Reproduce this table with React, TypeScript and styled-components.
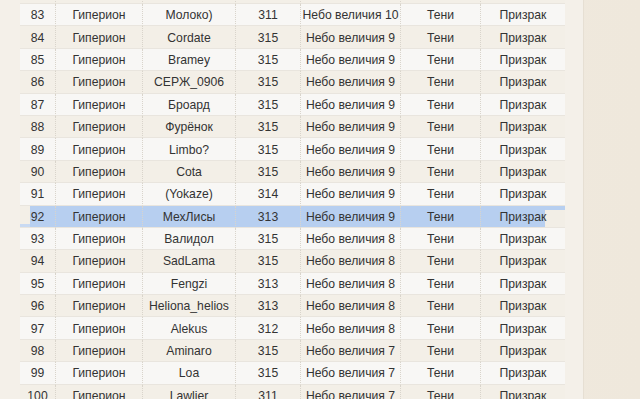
import React from 'react';
import styled, { createGlobalStyle } from 'styled-components';

interface Row {
  n: number;
  guild: string;
  name: string;
  level: number;
  rank: string;
  cls: string;
  sub: string;
}

// row 82 sits above the scroll position, only its bottom edge shows
const names: [string, number, number][] = [
  ['Молоко)', 311, 10],
  ['Cordate', 315, 9],
  ['Bramey', 315, 9],
  ['СЕРЖ_0906', 315, 9],
  ['Броард', 315, 9],
  ['Фурёнок', 315, 9],
  ['Limbo?', 315, 9],
  ['Cota', 315, 9],
  ['(Yokaze)', 314, 9],
  ['МехЛисы', 313, 9],
  ['Валидол', 315, 8],
  ['SadLama', 315, 8],
  ['Fengzi', 313, 8],
  ['Heliona_helios', 313, 8],
  ['Alekus', 312, 8],
  ['Aminaro', 315, 7],
  ['Loa', 315, 7],
  ['Lawlier', 311, 7],
];

const rows: Row[] = names.map(([name, level, rank], i) => ({
  n: 83 + i,
  guild: 'Гиперион',
  name,
  level,
  rank: `Небо величия ${rank}`,
  cls: 'Тени',
  sub: 'Призрак',
}));

const GlobalStyle = createGlobalStyle`
  html, body {
    margin: 0;
    padding: 0;
    height: 100%;
    overflow: hidden;
    background: #efe8dc;
  }
`;

const Page = styled.div`
  width: 640px;
  height: 399px;
  overflow: hidden;
  background: linear-gradient(90deg, #f1ece3 0%, #efe8dc 100%);
`;

const Panel = styled.div`
  width: 584px;
  height: 399px;
  overflow: hidden;
  box-sizing: border-box;
  padding-left: 20px;
  background: #f4f0e9;
  border-right: 1px solid #e6dfd3;
`;

const Grid = styled.div`
  display: grid;
  grid-template-columns: 35px 87px 93px 65px 100px 80px 85px;
  grid-auto-rows: 22.4px;
  width: 545px;
  margin-top: -18.4px;
  font-family: 'Liberation Sans', Arial, sans-serif;
  font-size: 12.2px;
  color: #333;
`;

const Cell = styled.div<{ $even: boolean; $sel: boolean; $pos: 'first' | 'mid' | 'last' }>`
  position: relative;
  display: flex;
  align-items: center;
  justify-content: center;
  box-sizing: border-box;
  padding-top: 1px;
  white-space: nowrap;
  border-bottom: 1px solid #e9e5de;
  border-left: ${(p) => (p.$pos === 'first' ? 'none' : '1px dotted #d9d4cb')};
  background: ${(p) => (p.$sel ? '#b7cff0' : p.$even ? '#f3efe7' : '#f8f7f5')};

  ${(p) =>
    p.$sel && p.$pos === 'first'
      ? `&::before {
          content: '';
          position: absolute;
          left: 0;
          top: 0;
          width: 10px;
          height: 18px;
          background: #f3efe7;
        }
        &::after {
          content: '';
          position: absolute;
          left: 0;
          top: 18px;
          width: 10px;
          bottom: 0;
          background: #c9daf2;
        }`
      : ''}

  ${(p) =>
    p.$sel && p.$pos === 'last'
      ? `&::after {
          content: '';
          position: absolute;
          right: 0;
          top: 4.4px;
          width: 20px;
          bottom: 0;
          background: #f2eee6;
        }`
      : ''}

  & > span {
    position: relative;
    z-index: 1;
  }
`;

const COLS = 7;

export default function App() {
  return (
    <Page>
      <GlobalStyle />
      <Panel>
        <Grid>
          {Array.from({ length: COLS }, (_, i) => (
            <Cell
              key={`82-${i}`}
              $even
              $sel={false}
              $pos={i === 0 ? 'first' : i === COLS - 1 ? 'last' : 'mid'}
            />
          ))}
          {rows.map((r) => {
            const even = r.n % 2 === 0;
            const sel = r.n === 92;
            const vals = [r.n, r.guild, r.name, r.level, r.rank, r.cls, r.sub];
            return vals.map((v, i) => (
              <Cell
                key={`${r.n}-${i}`}
                $even={even}
                $sel={sel}
                $pos={i === 0 ? 'first' : i === COLS - 1 ? 'last' : 'mid'}
              >
                <span>{v}</span>
              </Cell>
            ));
          })}
        </Grid>
      </Panel>
    </Page>
  );
}
